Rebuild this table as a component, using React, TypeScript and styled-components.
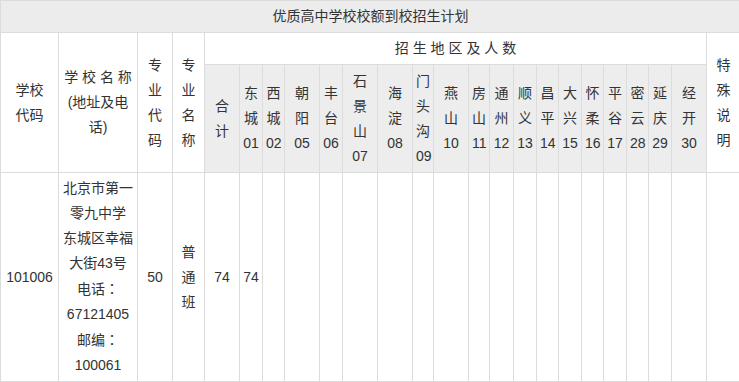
import React from 'react'
import styled, { createGlobalStyle } from 'styled-components'

const GlobalStyle = createGlobalStyle`
  html, body {
    margin: 0;
    padding: 0;
    background: #fff;
    overflow: hidden;
  }
  body {
    font-family: "Liberation Sans", Arial, "Noto Sans CJK SC", sans-serif;
  }
`

const Table = styled.table`
  width: 740px;
  table-layout: fixed;
  border-collapse: collapse;
  border: 1px solid #dcdcdc;
  font-size: 14px;
  line-height: 25px;
  color: #333;
`

const Col = styled.col<{ $w: number }>`
  width: ${(p) => p.$w}px;
`

const Row = styled.tr<{ $h: number }>`
  height: ${(p) => p.$h}px;
`

const Cell = styled.td<{ $shade?: boolean }>`
  border: 1px solid #dcdcdc;
  padding: 0 3px;
  text-align: center;
  vertical-align: middle;
  white-space: nowrap;
  background: ${(p) => (p.$shade ? '#ededed' : '#fff')};
`

const TitleCell = styled(Cell)`
  background: #ececec;
`

const Spaced = styled.span`
  white-space: pre;
`

// full-width colon drawn centred, as in the source page
const Colon = styled.span`
  font-family: "Noto Sans CJK JP", sans-serif;
`

type District = { lines: string[]; w: number }

const districts: District[] = [
  { lines: ['合', '计'], w: 35 },
  { lines: ['东', '城', '01'], w: 23 },
  { lines: ['西', '城', '02'], w: 22 },
  { lines: ['朝', '阳', '05'], w: 35 },
  { lines: ['丰', '台', '06'], w: 23 },
  { lines: ['石', '景', '山', '07'], w: 35 },
  { lines: ['海', '淀', '08'], w: 35 },
  { lines: ['门', '头', '沟', '09'], w: 21 },
  { lines: ['燕', '山', '10'], w: 35 },
  { lines: ['房', '山', '11'], w: 21 },
  { lines: ['通', '州', '12'], w: 24 },
  { lines: ['顺', '义', '13'], w: 23 },
  { lines: ['昌', '平', '14'], w: 22 },
  { lines: ['大', '兴', '15'], w: 23 },
  { lines: ['怀', '柔', '16'], w: 22 },
  { lines: ['平', '谷', '17'], w: 23 },
  { lines: ['密', '云', '28'], w: 22 },
  { lines: ['延', '庆', '29'], w: 23 },
  { lines: ['经', '开', '30'], w: 35 },
]

const leadCols = [58, 79, 35, 32]
const lastCol = 34

const counts = ['74', '74']

const Lines = ({ lines }: { lines: React.ReactNode[] }) => (
  <>
    {lines.map((l, i) => (
      <React.Fragment key={i}>
        {i > 0 && <br />}
        {l}
      </React.Fragment>
    ))}
  </>
)

export default function App() {
  const total = leadCols.length + districts.length + 1
  return (
    <>
      <GlobalStyle />
      <Table>
        <colgroup>
          {leadCols.map((w, i) => (
            <Col key={'l' + i} $w={w} />
          ))}
          {districts.map((d, i) => (
            <Col key={'d' + i} $w={d.w} />
          ))}
          <Col $w={lastCol} />
        </colgroup>
        <tbody>
          <Row $h={32}>
            <TitleCell colSpan={total}>优质高中学校校额到校招生计划</TitleCell>
          </Row>
          <Row $h={32}>
            <Cell rowSpan={2}>
              <Lines lines={['学校', '代码']} />
            </Cell>
            <Cell rowSpan={2}>
              <Spaced>学 校 名 称</Spaced>
              <br />
              (地址及电
              <br />
              话)
            </Cell>
            <Cell rowSpan={2}>
              <Lines lines={['专', '业', '代', '码']} />
            </Cell>
            <Cell rowSpan={2}>
              <Lines lines={['专', '业', '名', '称']} />
            </Cell>
            <Cell colSpan={districts.length}>
              <Spaced>招 生 地 区 及 人 数</Spaced>
            </Cell>
            <Cell rowSpan={2}>
              <Lines lines={['特', '殊', '说', '明']} />
            </Cell>
          </Row>
          <Row $h={108}>
            {districts.map((d, i) => (
              <Cell key={i} $shade>
                <Lines lines={d.lines} />
              </Cell>
            ))}
          </Row>
          <Row $h={209}>
            <Cell>101006</Cell>
            <Cell>
              <Lines
                lines={[
                  '北京市第一',
                  '零九中学',
                  '东城区幸福',
                  '大街43号',
                  <>
                    电话<Colon>：</Colon>
                  </>,
                  '67121405',
                  <>
                    邮编<Colon>：</Colon>
                  </>,
                  '100061',
                ]}
              />
            </Cell>
            <Cell>50</Cell>
            <Cell>
              <Lines lines={['普', '通', '班']} />
            </Cell>
            {districts.map((_, i) => (
              <Cell key={i}>{counts[i] ?? ''}</Cell>
            ))}
            <Cell />
          </Row>
        </tbody>
      </Table>
    </>
  )
}
